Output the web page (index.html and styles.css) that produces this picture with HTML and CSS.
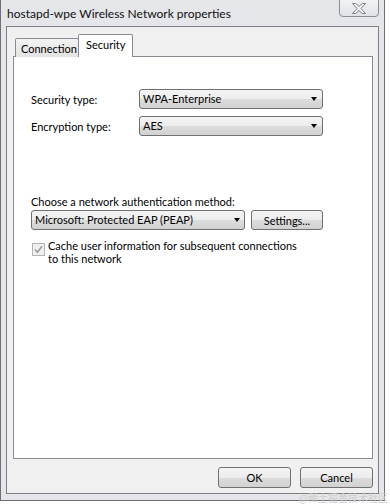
FILE: index.html
```html
<!DOCTYPE html>
<html lang="en">
<head>
  <meta charset="UTF-8">
  <title>hostapd-wpe Wireless Network properties</title>
  <link rel="stylesheet" href="styles.css">
</head>
<body>
  <div class="window">
    <div class="titlebar">
      <span class="title">hostapd-wpe Wireless Network properties</span>
      <button class="close-btn" aria-label="Close">
        <svg width="14" height="11" viewBox="0 0 14 11">
          <polygon points="0.5,0.5 3.7,0.5 7,3.4 10.3,0.5 13.5,0.5 8.9,5.5 13.5,10.5 10.3,10.5 7,7.6 3.7,10.5 0.5,10.5 5.1,5.5" fill="#f6f7f8" stroke="#7b7f86" stroke-width="1" stroke-linejoin="round"/>
        </svg>
      </button>
    </div>

    <div class="client">
      <div class="tabs">
        <div class="tab">Connection</div>
        <div class="tab active">Security</div>
      </div>

      <div class="tab-page">
        <div class="field-row">
          <label class="field-label">Security type:</label>
          <div class="combo combo-wide">
            <span>WPA-Enterprise</span>
            <i class="arrow"></i>
          </div>
        </div>
        <div class="field-row">
          <label class="field-label">Encryption type:</label>
          <div class="combo combo-wide">
            <span>AES</span>
            <i class="arrow"></i>
          </div>
        </div>

        <div class="auth-section">
          <div class="auth-label">Choose a network authentication method:</div>
          <div class="auth-row">
            <div class="combo combo-auth">
              <span>Microsoft: Protected EAP (PEAP)</span>
              <i class="arrow"></i>
            </div>
            <button class="btn btn-settings">Settings...</button>
          </div>
          <div class="check-row">
            <span class="checkbox">
              <svg width="9" height="9" viewBox="0 0 9 9">
                <path d="M1 4.5 L3.4 7.2 L8 1.2" fill="none" stroke="#9a9a9a" stroke-width="1.6"/>
              </svg>
            </span>
            <span class="check-text">Cache user information for subsequent connections to this network</span>
          </div>
        </div>
      </div>

      <div class="dialog-buttons">
        <button class="btn btn-dialog">OK</button>
        <button class="btn btn-dialog">Cancel</button>
      </div>
    </div>
  </div>
  <div class="watermark">@稀土掘金技术社区</div>
</body>
</html>
```

FILE: styles.css
```css
* {
  box-sizing: border-box;
}
body {
  margin: 0;
  background: #fff;
  font-family: Lato, "Noto Sans", sans-serif;
  font-size: 11px;
  color: #000;
  position: relative;
  width: 390px;
  height: 504px;
  overflow: hidden;
}
.window {
  width: 385px;
  height: 501px;
  background: #e4e6e9;
  border: 1px solid #6e7074;
  border-top: none;
  padding: 0 5px 6px 5px;
  display: flex;
  flex-direction: column;
}
.titlebar {
  height: 26px;
  display: flex;
  justify-content: space-between;
  align-items: flex-start;
}
.title {
  padding: 6px 0 0 1px;
  font-size: 12px;
  line-height: 16px;
  color: #111;
}
.close-btn {
  width: 40px;
  height: 18px;
  margin-top: -1px;
  padding: 0;
  border: 1px solid #8a8e95;
  border-radius: 0 0 4px 4px;
  background: linear-gradient(#f2f3f5, #dfe2e6);
  display: flex;
  align-items: center;
  justify-content: center;
}
.client {
  width: 373px;
  height: 468px;
  border: 1px solid #7d7f83;
  background: #f0f0f0;
  padding: 7px 5px 5px 6px;
  display: flex;
  flex-direction: column;
}
.tabs {
  display: flex;
  align-items: flex-end;
  padding-left: 2px;
  margin-bottom: -1px;
  position: relative;
  z-index: 1;
}
.tab {
  height: 19px;
  border: 1px solid #898c95;
  border-bottom: none;
  border-radius: 2px 2px 0 0;
  background: linear-gradient(#f3f3f3, #e2e2e2);
  padding: 3px 0 0 5px;
  line-height: 14px;
  width: 64px;
}
.tab.active {
  height: 23px;
  width: 55px;
  margin-left: -1px;
  background: #fff;
  padding: 3px 0 0 7px;
}
.tab-page {
  flex: 1;
  background: #fff;
  border: 1px solid #898c95;
  padding: 32px 0 0 17px;
}
.field-row {
  display: flex;
  align-items: center;
  height: 20px;
  margin-bottom: 7px;
}
.field-label {
  width: 108px;
}
.combo {
  height: 20px;
  border: 1px solid #707070;
  border-radius: 3px;
  background: linear-gradient(#f4f4f4 0%, #ececec 50%, #dcdcdc 51%, #d2d2d2 100%);
  display: flex;
  align-items: center;
  justify-content: space-between;
  padding: 0 5px 0 3px;
  line-height: 16px;
}
.combo-wide {
  width: 184px;
}
.combo-auth {
  width: 214px;
  padding-right: 4px;
}
.arrow {
  width: 0;
  height: 0;
  border-left: 3.5px solid transparent;
  border-right: 3.5px solid transparent;
  border-top: 4px solid #000;
}
.auth-section {
  margin-top: 58px;
}
.auth-label {
  line-height: 16px;
}
.auth-row {
  display: flex;
  gap: 6px;
}
.btn {
  font-family: inherit;
  font-size: 11px;
  color: #000;
  border: 1px solid #707070;
  border-radius: 3px;
  background: linear-gradient(#f4f4f4 0%, #ececec 50%, #dcdcdc 51%, #d2d2d2 100%);
  padding: 0;
}
.btn-settings {
  width: 72px;
  height: 20px;
}
.check-row {
  display: flex;
  align-items: flex-start;
  margin-top: 9px;
  padding-left: 1px;
}
.checkbox {
  width: 13px;
  height: 13px;
  margin-top: 4px;
  margin-right: 3px;
  border: 1px solid #b4b4b4;
  background: #f0f0f0;
  display: flex;
  align-items: center;
  justify-content: center;
  flex-shrink: 0;
}
.check-text {
  line-height: 13px;
  width: 258px;
}
.dialog-buttons {
  display: flex;
  justify-content: flex-end;
  gap: 9px;
  margin-top: 8px;
}
.btn-dialog {
  width: 73px;
  height: 21px;
}
.watermark {
  position: absolute;
  right: 2px;
  bottom: 0;
  font-family: "Noto Sans CJK SC", sans-serif;
  font-size: 10px;
  line-height: 13px;
  color: #cfcfcf;
}
```
